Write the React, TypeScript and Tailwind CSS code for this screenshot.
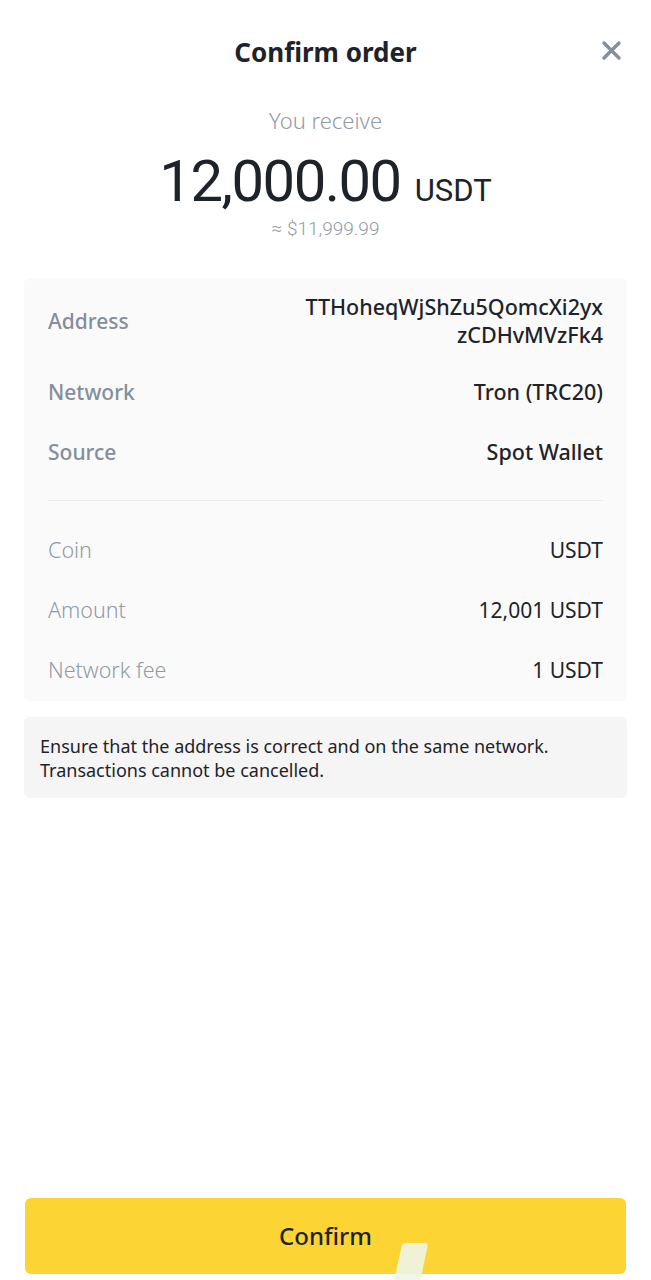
const font = { fontFamily: '"Noto Sans", "Open Sans", "Liberation Sans", sans-serif' };
const numFont = { fontFamily: '"Roboto", "Noto Sans", sans-serif' };

function Row({ label, value, strong }: { label: string; value: React.ReactNode; strong?: boolean }) {
  return (
    <div className="flex items-center justify-between">
      <span className={strong ? "text-[21px] font-medium leading-[28px] text-[#848e9c]" : "text-[21.5px] font-light leading-[28px] text-[#929aa5]"}>
        {label}
      </span>
      <span className={strong ? "text-right text-[21.5px] font-medium leading-[28px] text-[#1e2329]" : "text-right text-[21px] leading-[28px] text-[#1e2329]"}>
        {value}
      </span>
    </div>
  );
}

export default function App() {
  return (
    <div className="flex min-h-[1280px] w-[651px] flex-col bg-white" style={font}>
      <div className="relative flex h-[104px] items-center justify-center">
        <h1 className="text-[26px] font-bold text-[#1e2329]">Confirm order</h1>
        <button className="absolute right-[29px] top-[40px] text-[#848e9c]">
          <svg width="21" height="21" viewBox="0 0 21 21">
            <path d="M3 3L18 18M18 3L3 18" stroke="currentColor" strokeWidth="3.4" strokeLinecap="round" />
          </svg>
        </button>
      </div>

      <div className="flex flex-col items-center">
        <p className="mt-[2px] text-[22px] font-light leading-[28px] text-[#929aa5]">You receive</p>
        <div className="mt-[15px] flex items-baseline gap-[14px] text-[#1e2329]" style={numFont}>
          <span className="text-[58px] font-normal leading-[64px] tracking-[-1.5px]">12,000.00</span>
          <span className="text-[31px] font-normal">USDT</span>
        </div>
        <p className="mt-[1px] text-[19px] font-light leading-[26px] text-[#929aa5]" style={numFont}>≈ $11,999.99</p>
      </div>

      <div className="mx-[24px] mt-[36px] rounded-[6px] bg-[#fafafa] px-[24px] pb-[17px] pt-[15px]">
        <div className="flex flex-col">
          <Row strong label="Address" value={<>TTHoheqWjShZu5QomcXi2yx<br />zCDHvMVzFk4</>} />
          <div className="mt-[29px]">
            <Row strong label="Network" value="Tron (TRC20)" />
          </div>
          <div className="mt-[32px]">
            <Row strong label="Source" value="Spot Wallet" />
          </div>
        </div>
        <div className="mt-[34px] h-px bg-[#eaecef]" />
        <div className="mt-[35px] flex flex-col gap-[32px]">
          <Row label="Coin" value="USDT" />
          <Row label="Amount" value="12,001 USDT" />
          <Row label="Network fee" value="1 USDT" />
        </div>
      </div>

      <div className="mx-[24px] mt-[16px] rounded-[6px] bg-[#f5f5f5] px-[16px] pb-[16px] pt-[17px] text-[18px] leading-[24px] text-[#1e2329]">
        Ensure that the address is correct and on the same network.
        <br />
        Transactions cannot be cancelled.
      </div>

      <div className="flex-1" />

      <div className="relative px-[25px] pb-[6px]">
        <button className="flex h-[76px] w-full items-center justify-center rounded-[6px] bg-[#fcd535] text-[24px] font-medium text-[#1e2329]">
          Confirm
        </button>
        <span className="absolute left-[398px] top-[45px] h-[40px] w-[26px] -skew-x-12 rounded-[3px] bg-[#eef5e8]/90" />
      </div>
    </div>
  );
}
